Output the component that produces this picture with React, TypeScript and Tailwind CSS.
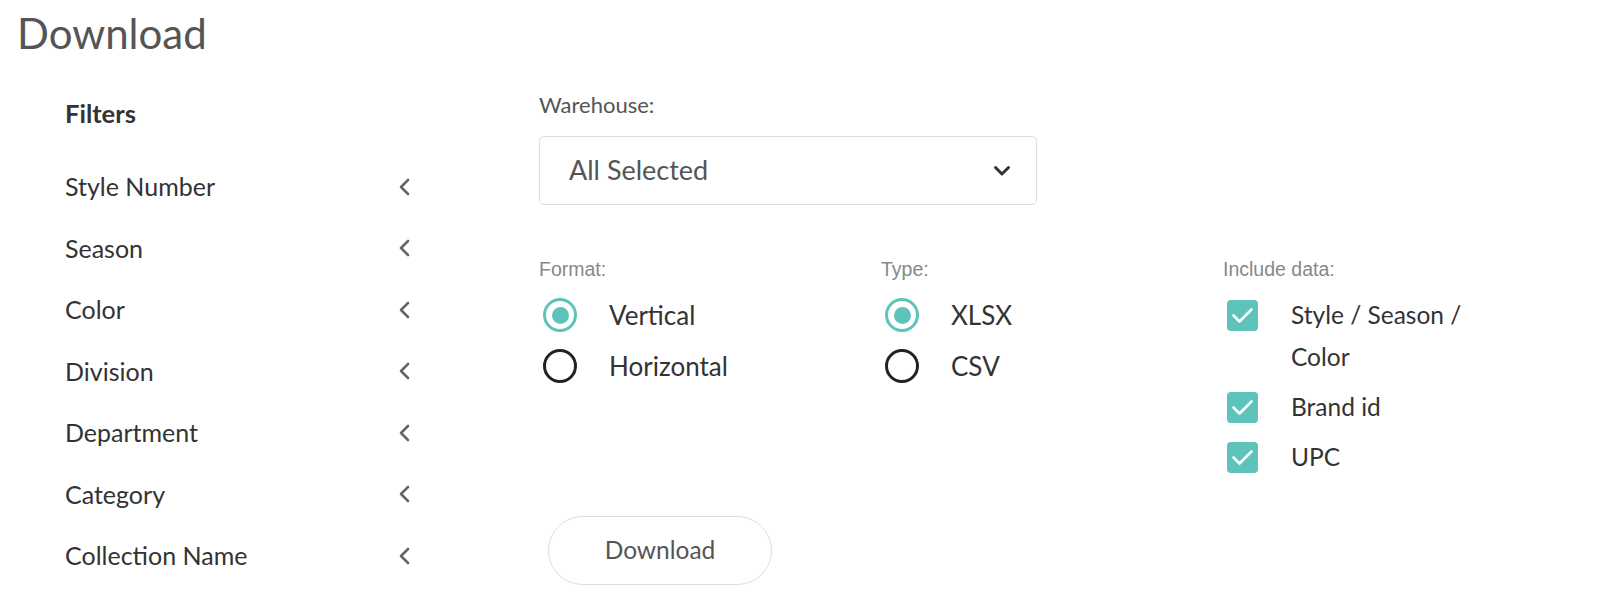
import React from "react";

function ChevronLeft() {
  return (
    <svg width="12" height="18" viewBox="0 0 12 18" fill="none">
      <polyline points="10,2 3,9 10,16" stroke="#666" strokeWidth="2.6" strokeLinecap="round" strokeLinejoin="round" />
    </svg>
  );
}

function ChevronDown() {
  return (
    <svg width="18" height="12" viewBox="0 0 18 12" fill="none">
      <polyline points="2.5,2.5 9,9 15.5,2.5" stroke="#333" strokeWidth="3" strokeLinecap="round" strokeLinejoin="round" />
    </svg>
  );
}

function Radio({ checked, label }: { checked: boolean; label: string }) {
  return (
    <div className="flex items-center h-[42px]">
      <div className="ml-[4px] w-[34px] h-[34px] shrink-0 flex items-center justify-center">
        {checked ? (
          <div className="w-[34px] h-[34px] rounded-full border-[3px] border-[#5dc3bb] flex items-center justify-center">
            <div className="w-[17px] h-[17px] rounded-full bg-[#5dc3bb]" />
          </div>
        ) : (
          <div className="w-[34px] h-[34px] rounded-full border-[3px] border-[#222]" />
        )}
      </div>
      <span className="ml-[32px] text-[26px] leading-[42px] text-[#333]">{label}</span>
    </div>
  );
}

function Check({ label }: { label: React.ReactNode }) {
  return (
    <div className="flex items-start">
      <div className="ml-[4px] mt-[6px] w-[31px] h-[31px] shrink-0 rounded-[4px] bg-[#5dc3bb] flex items-center justify-center">
        <svg width="31" height="31" viewBox="0 0 31 31" fill="none">
          <polyline points="6.5,15.5 12.5,21.5 24.5,9.5" stroke="#fff" strokeWidth="2.6" strokeLinecap="round" strokeLinejoin="round" />
        </svg>
      </div>
      <span className="ml-[33px] w-[190px] text-[24.5px] leading-[42px] text-[#333]">{label}</span>
    </div>
  );
}

export default function App() {
  const filters = [
    "Style Number",
    "Season",
    "Color",
    "Division",
    "Department",
    "Category",
    "Collection Name",
  ];
  return (
    <div className="w-[1600px] h-[607px] bg-white overflow-hidden font-['Lato',sans-serif]">
      <h1 className="pl-[17px] pt-[8px] text-[42px] leading-[50px] font-normal text-[#555]">Download</h1>
      <div className="flex">
        <aside className="w-[410px] shrink-0 pl-[65px] pt-[41px]">
          <div className="text-[25.5px] leading-[29px] font-bold text-[#333]">Filters</div>
          <ul className="mt-[28px]">
            {filters.map((f) => (
              <li key={f} className="h-[61.5px] flex items-center justify-between text-[25px] text-[#333]">
                <span>{f}</span>
                <ChevronLeft />
              </li>
            ))}
          </ul>
        </aside>
        <main className="ml-[129px] pt-[34px]">
          <div className="text-[22px] leading-[26px] text-[#555]">Warehouse:</div>
          <div className="mt-[18px] w-[498px] h-[69px] rounded-[5px] border border-[#ddd] flex items-center justify-between pl-[29px] pr-[25px]">
            <span className="text-[27px] text-[#555]">All Selected</span>
            <ChevronDown />
          </div>
          <div className="mt-[53px] flex">
            <div className="w-[342px]">
              <div className="font-['Liberation_Sans',Arial,sans-serif] text-[19.5px] leading-[22px] text-[#888]">Format:</div>
              <div className="mt-[14px] flex flex-col gap-[9px]">
                <Radio checked label="Vertical" />
                <Radio checked={false} label="Horizontal" />
              </div>
            </div>
            <div className="w-[342px]">
              <div className="font-['Liberation_Sans',Arial,sans-serif] text-[19.5px] leading-[22px] text-[#888]">Type:</div>
              <div className="mt-[14px] flex flex-col gap-[9px]">
                <Radio checked label="XLSX" />
                <Radio checked={false} label="CSV" />
              </div>
            </div>
            <div className="w-[342px]">
              <div className="font-['Liberation_Sans',Arial,sans-serif] text-[19.5px] leading-[22px] text-[#888]">Include data:</div>
              <div className="mt-[14px] flex flex-col gap-[8px]">
                <Check label="Style / Season / Color" />
                <Check label="Brand id" />
                <Check label="UPC" />
              </div>
            </div>
          </div>
          <button className="mt-[38px] ml-[9px] w-[224px] h-[69px] rounded-full border border-[#ddd] bg-white text-[24.5px] text-[#555] font-['Lato',sans-serif]">
            Download
          </button>
        </main>
      </div>
    </div>
  );
}
